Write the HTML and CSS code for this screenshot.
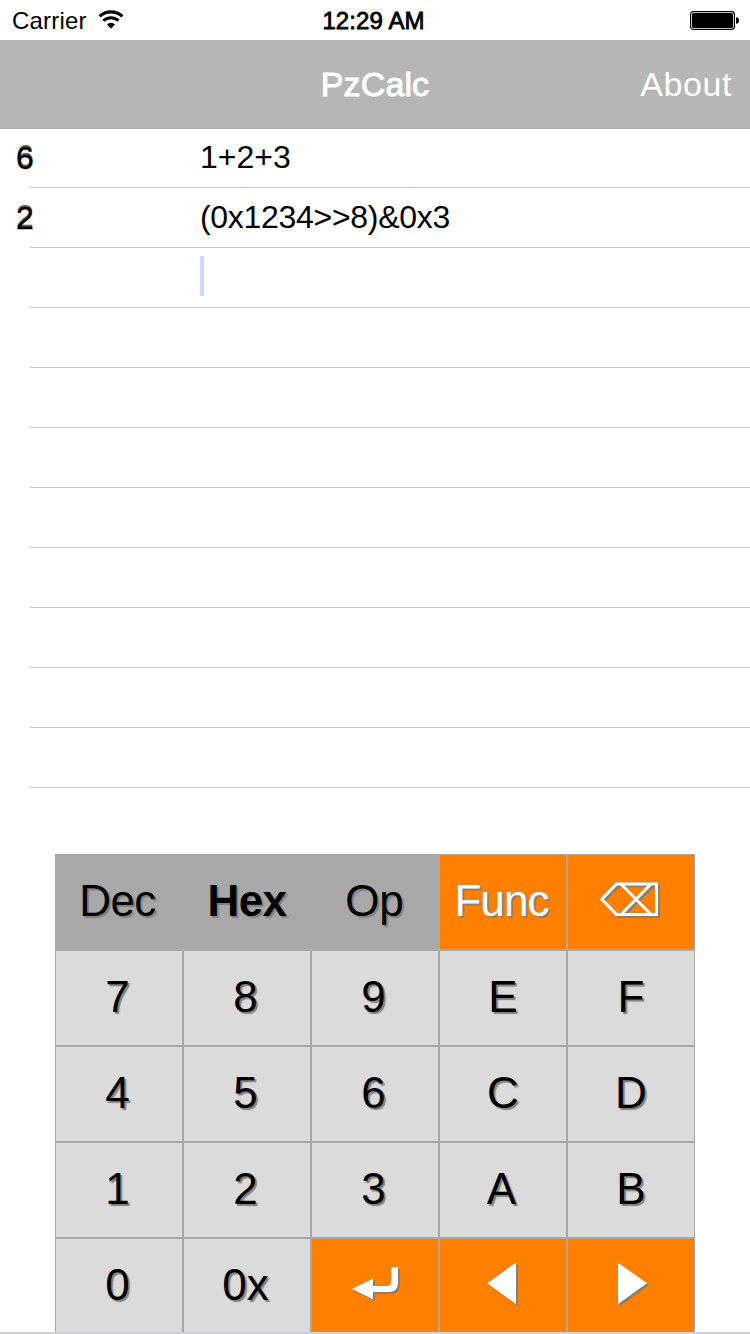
FILE: index.html
```html
<!DOCTYPE html>
<html lang="en">
<head>
<meta charset="utf-8">
<title>PzCalc</title>
<link rel="stylesheet" href="styles.css">
</head>
<body>
<div class="screen">
  <header class="status">
    <div class="status-left">
      <span class="carrier">Carrier</span>
      <svg class="wifi" width="26" height="20" viewBox="0 0 26 20" fill="none" stroke="#000">
        <path d="M1.6 6.4 A16.6 16.6 0 0 1 24.4 6.4" stroke-width="3.1"/>
        <path d="M5.4 10.8 A10.8 10.8 0 0 1 20.6 10.8" stroke-width="3"/>
        <path d="M9 14.4 A6 6 0 0 1 17 14.4 L13 18.8 Z" fill="#000" stroke="none"/>
      </svg>
    </div>
    <span class="time">12:29 AM</span>
    <svg class="battery" width="50" height="20" viewBox="0 0 50 20">
      <rect x="0.6" y="0.6" width="43.8" height="17.8" rx="2.8" fill="none" stroke="#000" stroke-width="1.2"/>
      <rect x="2" y="2" width="41" height="15" rx="1.5"/>
      <path d="M46 6.3 Q49 6.3 49 9.5 Q49 12.7 46 12.7 Z"/>
    </svg>
  </header>
  <nav class="nav">
    <span class="nav-title">PzCalc</span>
    <span class="nav-about">About</span>
  </nav>
  <main class="list">
    <div class="row"><span class="result">6</span><span class="expr">1+2+3</span></div>
    <div class="row"><span class="result">2</span><span class="expr long">(0x1234&gt;&gt;8)&amp;0x3</span></div>
    <div class="row"><span class="result"></span><span class="caret"></span></div>
    <div class="row"></div>
    <div class="row"></div>
    <div class="row"></div>
    <div class="row"></div>
    <div class="row"></div>
    <div class="row"></div>
    <div class="row"></div>
    <div class="row"></div>
  </main>
  <section class="keypad">
    <div class="key mode"><span class="tight">Dec</span></div>
    <div class="key mode active"><span>Hex</span></div>
    <div class="key mode op"><span>Op</span></div>
    <div class="key accent"><span class="func">Func</span></div>
    <div class="key accent icon-key">
      <svg class="icon" width="66" height="44" viewBox="0 0 66 44" fill="none" stroke="#fff" stroke-width="3">
        <path d="M18.5 4 H58.5 V34.5 H18.5 L3.8 19.3 Z"/>
        <path d="M23 4 L53 34.5 M53 4 L23 34.5"/>
      </svg>
    </div>
    <div class="key"><span>7</span></div>
    <div class="key"><span>8</span></div>
    <div class="key"><span>9</span></div>
    <div class="key letter"><span>E</span></div>
    <div class="key letter"><span>F</span></div>
    <div class="key"><span>4</span></div>
    <div class="key"><span>5</span></div>
    <div class="key"><span>6</span></div>
    <div class="key letter"><span>C</span></div>
    <div class="key letter"><span>D</span></div>
    <div class="key"><span>1</span></div>
    <div class="key"><span>2</span></div>
    <div class="key"><span>3</span></div>
    <div class="key"><span>A</span></div>
    <div class="key letter"><span>B</span></div>
    <div class="key"><span>0</span></div>
    <div class="key"><span>0x</span></div>
    <div class="key accent icon-key">
      <svg class="icon" width="126" height="94" viewBox="312 1239 126 94" fill="#fff">
        <path d="M352 1289 L373 1278.7 V1286 H387 Q391.3 1286 391.3 1281.5 V1267.3 H398 V1282.5 Q398 1292 388.5 1292 H373 V1299.3 Z"/>
      </svg>
    </div>
    <div class="key accent icon-key">
      <svg class="icon" width="126" height="94" viewBox="440 1239 126 94" fill="#fff">
        <path d="M487.3 1283.3 L516 1262.7 V1304 Z"/>
      </svg>
    </div>
    <div class="key accent icon-key">
      <svg class="icon" width="126" height="94" viewBox="568 1239 126 94" fill="#fff">
        <path d="M618 1262.7 L647 1283.3 L618 1304 Z"/>
      </svg>
    </div>
  </section>
  <footer class="edge"></footer>
</div>
</body>
</html>
```

FILE: styles.css
```css
* { box-sizing: border-box; }
body { margin: 0; background: #fff; font-family: "Liberation Sans", Arial, sans-serif; color: #000; }
.screen { width: 750px; height: 1334px; display: flex; flex-direction: column; overflow: hidden; }

.status { height: 40px; flex: none; display: grid; grid-template-columns: 1fr auto 1fr; align-items: center; padding: 0 10px 0 12px; }
.status-left { display: flex; align-items: center; gap: 11px; font-size: 24px; }
.carrier { line-height: 28px; padding-top: 2px; letter-spacing: 0.2px; }
.time { font-size: 24px; line-height: 28px; padding: 2px 5px 0 0; letter-spacing: 0.1px; -webkit-text-stroke: 0.8px #000; }
.battery { justify-self: end; margin-top: 1px; }

.nav { height: 89px; flex: none; background: #b6b6b6; border-bottom: 1px solid #adadad; display: grid; grid-template-columns: 1fr auto 1fr; align-items: center; padding: 0 18px; color: #fff; font-size: 34px; }
.nav-title { grid-column: 2; letter-spacing: 0.1px; -webkit-text-stroke: 1px #fff; }
.nav-about { justify-self: end; letter-spacing: 0.6px; }

.list { flex: none; margin-top: -1px; }
.row { height: 60px; display: flex; align-items: center; position: relative; padding-left: 16px; font-size: 32px; }
.row::after { content: ""; position: absolute; left: 30px; right: 0; bottom: 0; height: 1px; background: #c8c7cc; }
.result { width: 184px; line-height: 36px; padding-bottom: 1px; text-shadow: 0 -2px 0 rgba(0, 0, 0, 0.65); -webkit-text-stroke: 0.3px #000; }
.expr { line-height: 36px; padding-bottom: 2px; }
.long { letter-spacing: -0.3px; }
.caret { width: 4px; height: 40px; background: #d0d9fd; margin-bottom: 4px; }

.keypad { flex: none; width: 640px; height: 478px; margin: 66px 0 0 55px; overflow: hidden; display: grid; grid-template-columns: repeat(5, 128px); grid-auto-rows: 96px; }
.key { background: #dbdbdb; border: 1px solid #a8a8a8; display: flex; align-items: center; justify-content: center; font-size: 44px; line-height: 50px; text-shadow: 2px 2px 1px #808080; padding: 0 3px 2px 0; }
.letter { padding-right: 0; }
.mode { background: #a8a8a8; }
.op { padding-right: 1px; }
.tight { letter-spacing: -0.5px; }
.active { font-weight: bold; letter-spacing: -0.6px; padding-right: 0; }
.accent { background: #ff8000; color: #fff; }
.func { letter-spacing: -0.9px; }
.icon-key { padding: 0; }
.icon { filter: drop-shadow(2px 2px 0 #808080); }
.edge { flex: none; height: 2px; background: #d2d2d4; }
```
